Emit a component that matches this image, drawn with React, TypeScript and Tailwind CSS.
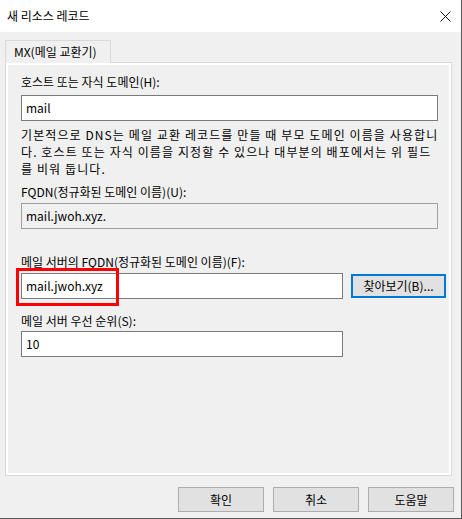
import React from 'react';

const font = { fontFamily: '"Noto Sans CJK KR", "Noto Sans", sans-serif' };

const Label: React.FC<{ children: React.ReactNode; className?: string }> = ({ children, className = '' }) => (
  <div className={`h-4 leading-4 text-[12px] text-[#000] whitespace-nowrap ${className}`}>{children}</div>
);

const Field: React.FC<{ value: string; width: string; readOnly?: boolean; className?: string }> = ({
  value,
  width,
  readOnly,
  className = '',
}) => (
  <div
    className={`${width} h-[26px] border flex items-center pl-[4px] text-[12px] text-black ${
      readOnly ? 'bg-[#f0f0f0] border-[#a0a0a0]' : 'bg-white border-[#7a7a7a]'
    } ${className}`}
  >
    {value}
  </div>
);

const DlgButton: React.FC<{ label: string }> = ({ label }) => (
  <button className="w-[86px] h-[25px] bg-[#e1e1e1] border border-[#adadad] text-[12px] text-black leading-none">
    {label}
  </button>
);

export default function App() {
  return (
    <div className="w-[462px] h-[519px] bg-[#f0f0f0] border-r border-b border-[#5a5a5a] overflow-hidden" style={font}>
      {/* title bar */}
      <div className="h-8 bg-white flex items-center justify-between pl-[7px] pr-[10px]">
        <span className="text-[12px] text-black">새 리소스 레코드</span>
        <svg width="11" height="11" viewBox="0 0 11 11" className="mt-[1px]">
          <path d="M0.5 0.5 L10.5 10.5 M10.5 0.5 L0.5 10.5" stroke="#111" strokeWidth="1" />
        </svg>
      </div>

      <div className="pl-[5px] pr-[9px] pt-2">
        {/* tab */}
        <div className="w-[106px] h-[23px] border border-b-0 border-[#d9d9d9] bg-[#f0f0f0] flex items-center pl-[8px] text-[12px] text-black relative z-10 -mb-px">
          MX(메일 교환기)
        </div>

        {/* panel */}
        <div className="h-[414px] border border-[#d9d9d9]">
          <div className="h-full border-2 border-white pl-[13px] pt-[9px] relative">
            <Label>호스트 또는 자식 도메인(H):</Label>
            <Field value="mail" width="w-[417px]" className="mt-[5px]" />

            <div className="mt-[5px] text-[12px] leading-[17px] tracking-[1.1px] text-black whitespace-nowrap">
              기본적으로 DNS는 메일 교환 레코드를 만들 때 부모 도메인 이름을 사용합니
              <br />
              다. 호스트 또는 자식 이름을 지정할 수 있으나 대부분의 배포에서는 위 필드
              <br />
              를 비워 둡니다.
            </div>

            <Label className="mt-[7px]">FQDN(정규화된 도메인 이름)(U):</Label>
            <Field value="mail.jwoh.xyz." width="w-[417px]" readOnly className="mt-[3px]" />

            <Label className="mt-[25px]">메일 서버의 FQDN(정규화된 도메인 이름)(F):</Label>
            <div className="mt-[3px] flex items-center gap-[8px]">
              <Field value="mail.jwoh.xyz" width="w-[322px]" />
              <button className="w-[95px] h-[24px] bg-[#e1e1e1] border-2 border-[#0078d7] text-[12px] text-black leading-none">
                찾아보기(B)...
              </button>
            </div>
            {/* highlight annotation */}
            <div className="absolute left-[8px] top-[203px] w-[103px] h-[38px] border-[3px] border-[#ff0000] pointer-events-none" />

            <Label className="mt-[14px]">메일 서버 우선 순위(S):</Label>
            <Field value="10" width="w-[322px]" className="mt-[2px]" />
          </div>
        </div>

        {/* buttons */}
        <div className="flex justify-end gap-[9px] mt-[11px] -mr-[2px]">
          <DlgButton label="확인" />
          <DlgButton label="취소" />
          <DlgButton label="도움말" />
        </div>
      </div>
    </div>
  );
}
